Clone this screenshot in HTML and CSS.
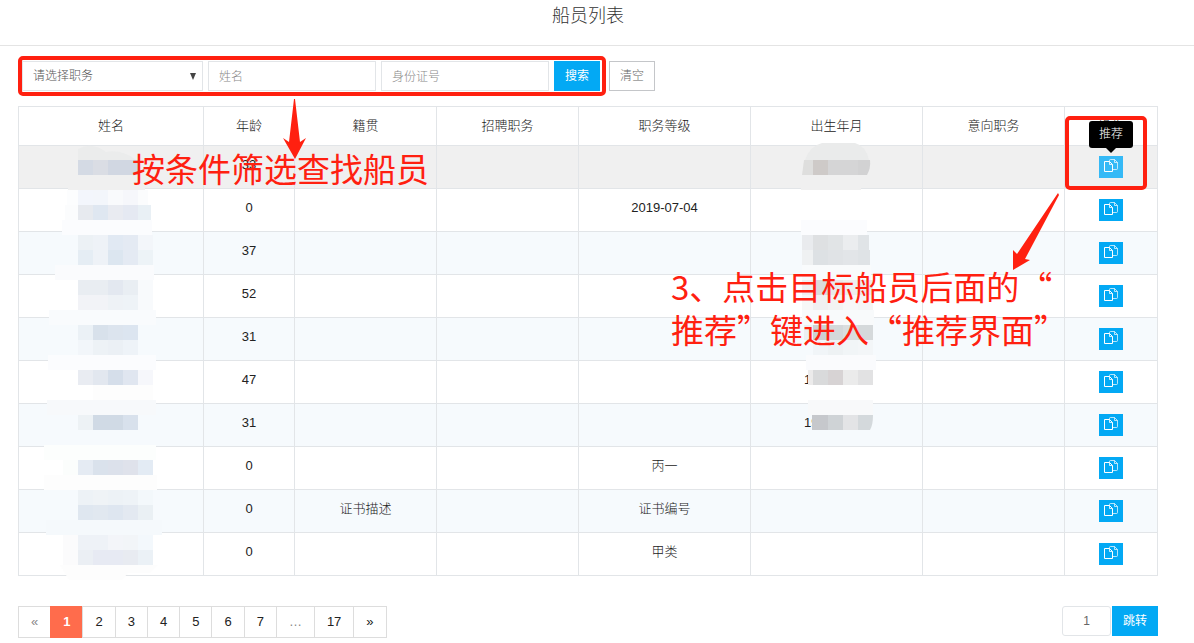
FILE: index.html
```
<!DOCTYPE html>
<html lang="zh-CN">
<head>
<meta charset="utf-8">
<title>船员列表</title>
<link rel="stylesheet" href="styles.css">
</head>
<body>
<svg class="defs" aria-hidden="true">
  <symbol id="copy" viewBox="0 0 16 14">
    <path d="M6.500 2.500V1.500Q6.500 .5 7.500 .5H11.500L14.500 3.500V9.500Q14.500 10.500 13.500 10.500H9.500 M11.500 .5V3.500H14.500" fill="none" stroke="#fff" opacity=".7"/>
    <path d="M1.500 2.500H6.500L9.500 5.500V12.500H1.500Z" fill="none" stroke="#fff"/>
    <path d="M6.500 2.500V5.500H9.500" fill="none" stroke="#fff" opacity=".8"/>
  </symbol>
</svg>
<header class="page-header"><h1>船员列表</h1></header>
<main class="content">
  <form class="filters">
    <div class="select-wrap">
      <select aria-label="职务"><option>请选择职务</option></select>
      <svg class="caret" viewBox="0 0 6 7" aria-hidden="true"><path d="M0 0H6L3 7Z"/></svg>
    </div>
    <input type="text" placeholder="姓名" aria-label="姓名">
    <input type="text" placeholder="身份证号" aria-label="身份证号">
    <button type="button" class="btn primary">搜索</button>
    <button type="button" class="btn clear">清空</button>
  </form>
  <table class="crew">
    <colgroup><col class="c-name"><col class="c-age"><col class="c-mid"><col class="c-mid"><col class="c-wide"><col class="c-wide"><col class="c-mid"><col class="c-act"></colgroup>
    <thead><tr><th>姓名</th><th>年龄</th><th>籍贯</th><th>招聘职务</th><th>职务等级</th><th>出生年月</th><th>意向职务</th><th>操作</th></tr></thead>
    <tbody>
      <tr class="hover"><td></td><td>33</td><td></td><td></td><td></td><td></td><td></td><td><button class="copy" aria-label="推荐"><svg><use href="#copy"/></svg><span class="tip">推荐</span></button></td></tr>
      <tr><td></td><td>0</td><td></td><td></td><td>2019-07-04</td><td></td><td></td><td><button class="copy" aria-label="推荐"><svg><use href="#copy"/></svg></button></td></tr>
      <tr><td></td><td>37</td><td></td><td></td><td></td><td></td><td></td><td><button class="copy" aria-label="推荐"><svg><use href="#copy"/></svg></button></td></tr>
      <tr><td></td><td>52</td><td></td><td></td><td></td><td></td><td></td><td><button class="copy" aria-label="推荐"><svg><use href="#copy"/></svg></button></td></tr>
      <tr><td></td><td>31</td><td></td><td></td><td></td><td></td><td></td><td><button class="copy" aria-label="推荐"><svg><use href="#copy"/></svg></button></td></tr>
      <tr><td></td><td>47</td><td></td><td></td><td></td><td class="partial">1</td><td></td><td><button class="copy" aria-label="推荐"><svg><use href="#copy"/></svg></button></td></tr>
      <tr><td></td><td>31</td><td></td><td></td><td></td><td class="partial">19</td><td></td><td><button class="copy" aria-label="推荐"><svg><use href="#copy"/></svg></button></td></tr>
      <tr><td></td><td>0</td><td></td><td></td><td>丙一</td><td></td><td></td><td><button class="copy" aria-label="推荐"><svg><use href="#copy"/></svg></button></td></tr>
      <tr><td></td><td>0</td><td>证书描述</td><td></td><td>证书编号</td><td></td><td></td><td><button class="copy" aria-label="推荐"><svg><use href="#copy"/></svg></button></td></tr>
      <tr><td></td><td>0</td><td></td><td></td><td>甲类</td><td></td><td></td><td><button class="copy" aria-label="推荐"><svg><use href="#copy"/></svg></button></td></tr>
    </tbody>
  </table>
  <footer class="pager">
    <nav class="pages" aria-label="分页">
      <span class="muted">«</span><a class="active" href="#">1</a><a href="#">2</a><a href="#">3</a><a href="#">4</a><a href="#">5</a><a href="#">6</a><a href="#">7</a><span class="muted">…</span><a href="#">17</a><a href="#">»</a>
    </nav>
    <form class="jump"><input type="text" value="1" aria-label="页码"><button type="button" class="btn primary">跳转</button></form>
  </footer>
</main>
<svg class="overlay" width="1194" height="643" aria-hidden="true">
  <g id="mosaic"></g>
  <path d="M294 99H295L300 142L306 138L295 159L283 138L289 142Z" fill="#ff2010"/>
  <path d="M1058 193L1059 195L1025 259L1030 260L1013 270V250L1017 254Z" fill="#ff2010"/>
</svg>
<div class="mark mark-filter"></div>
<div class="mark mark-action"></div>
<p class="note note-filter">按条件筛选查找船员</p>
<p class="note note-action">3、点击目标船员后面的“<br>推荐”键进入“推荐界面”</p>
<script src="mosaic.js"></script>
</body>
</html>
```
FILE: styles.css
```
* { box-sizing: border-box; }
body {
  margin: 0;
  position: relative;
  background: #fff;
  color: #222;
  font: 13px/19px "Liberation Sans", "Noto Sans CJK SC", sans-serif;
}
button, input, select { font: inherit; font-size: 12px; }
.defs { display: none; }
.page-header {
  height: 46px;
  padding: 3px 36px 0 18px;
  border-bottom: 1px solid #e4e4e4;
  text-align: center;
}
.page-header h1 { margin: 0; font-size: 18px; line-height: 26px; font-weight: 300; color: #333; }
.content { padding: 15px 36px 0 18px; }
.filters { display: flex; gap: 5px; padding-left: 4px; margin-bottom: 15px; }
.select-wrap { position: relative; width: 181px; }
.filters select, .filters input {
  display: block;
  height: 30px;
  padding: 1px 10px 0;
  border: 1px solid #e2e5e8;
  border-radius: 0;
  background: #fff;
  color: #555;
  font-weight: 300;
}
.filters select { width: 100%; appearance: none; }
.filters input { width: 168px; }
.filters input::placeholder { color: #888; opacity: 1; }
.caret { position: absolute; right: 7px; top: 12px; width: 6px; height: 7px; fill: #444; }
.btn { width: 46px; height: 30px; padding: 0; border: 0; }
.primary { background: #03a9f4; color: #fff; }
.clear { margin-left: 4px; border: 1px solid #c4c6c9; background: #fff; color: #666; font-weight: 300; }

.crew { width: calc(100% - 1px); table-layout: fixed; border-collapse: collapse; text-align: center; }
.c-name { width: 185px; }
.c-age { width: 91px; }
.c-mid { width: 142px; }
.c-wide { width: 172px; }
.c-act { width: 93px; }
.crew th, .crew td { border: 1px solid #e2e5e8; }
.crew th { height: 39px; padding: 0 0 2px; font-weight: 300; color: #222; }
.crew td { height: 43px; padding: 9px 0; vertical-align: top; font-weight: 300; }
.crew td:last-child { padding: 10px 0; }
.crew tbody tr:nth-child(odd) { background: #f6fafd; }
.crew tbody tr.hover { background: #f0f0f0; }
.crew td.partial { padding-left: 53px; text-align: left; }
.copy {
  position: relative;
  display: block;
  width: 24px;
  height: 22px;
  margin: 0 auto;
  padding: 3px 4px 5px;
  border: 0;
  background: #03a9f4;
}
.copy svg { display: block; width: 16px; height: 14px; }
.hover .copy { background: #35b9f6; }
.tip {
  position: absolute;
  left: -10px;
  bottom: 30px;
  width: 44px;
  height: 27px;
  border-radius: 3px;
  background: #000;
  color: #fff;
  font-size: 12px;
  line-height: 27px;
}
.tip::after {
  content: "";
  position: absolute;
  left: 17px;
  top: 27px;
  border: 5px solid transparent;
  border-top-color: #000;
  border-bottom: 0;
}

.pager { display: flex; justify-content: space-between; margin-top: 30px; }
.pages { display: flex; }
.pages a, .pages span {
  height: 32px;
  padding: 0 12px;
  margin-left: -1px;
  border: 1px solid #ddd;
  line-height: 30px;
  color: #222;
  text-decoration: none;
}
.pages :first-child { margin-left: 0; }
.pages .muted { color: #888; }
.pages .active { border-color: #ff6c4c; background: #ff6c4c; color: #fff; font-weight: bold; }
.jump { display: flex; gap: 1px; }
.jump input { width: 49px; height: 30px; border: 1px solid #e2e5e8; border-radius: 3px; text-align: center; color: #666; }

.overlay { position: absolute; left: 0; top: 0; pointer-events: none; }
.mark { position: absolute; border: 4px solid #ff2010; border-radius: 5px; pointer-events: none; }
.mark-filter { left: 18px; top: 56px; width: 588px; height: 40px; }
.mark-action { left: 1065px; top: 116px; width: 82px; height: 74px; }
.note {
  position: absolute;
  margin: 0;
  font: 33px/43px "Noto Sans CJK SC", sans-serif;
  color: #ff2010;
  white-space: nowrap;
  pointer-events: none;
}
.note-filter { left: 132px; top: 147px; }
.note-action { left: 671px; top: 265px; }
```
FILE: mosaic.js
```
// Privacy mosaic: each run is [y, startX, endX, colour]; rows are 15px tall.
const runs = [];
const cells = (y, xs, colours) => colours.forEach((c, i) => runs.push([y, xs[i], xs[i + 1], c]));
const L = [78, 93, 108, 123, 138, 153];
const R = [813, 828, 843, 858, 873];

cells(160, [78, 93, 108, 138], ["#d4dae4", "#dadde4", "#d1d7e2"]);
cells(175, [68, 145], ["#f0f0f0"]);
cells(190, [67, 78, 93, 108, 123, 138, 148], ["#fcfdfe", "#f3f6fc", "#f3f6fb", "#f9fafc", "#f6f7fb", "#fbfcfd"]);
cells(205, [65, 78, 93, 108, 123, 138, 151], ["#fbfcfd", "#e7eaef", "#dfe7f1", "#e9ebf1", "#e5e9f2", "#e9f0f5"]);
cells(220, [62, 152], ["#fbfcfe"]);
cells(235, L, ["#ecf1f5", "#eef2f7", "#e1e9f3", "#e4eaf3", "#f3f6fa"]);
cells(250, L, ["#e5edf4", "#eef2f7", "#dce6f0", "#e4eaf3", "#edf3f7"]);
cells(265, [55, 154], ["#fafbfd"]);
cells(280, L, ["#e9edf2", "#e9edf2", "#e3e8f0", "#e9eef3", "#f8fafc"]);
cells(295, L, ["#f2f3f7", "#f2f3f7", "#eef2f6", "#eef3f7", "#f8fafc"]);
cells(310, [49, 156], ["#f9fbfd"]);
cells(325, L, ["#ebf1f6", "#d8e1eb", "#dce4ee", "#dce5f0"]);
cells(340, L, ["#f2f6fa", "#edf2f6", "#ebf0f5", "#eef3f8"]);
cells(355, [48, 156], ["#fbfcfe"]);
cells(370, L, ["#e9ecf2", "#e2e7ef", "#d5deea", "#e0e6f0", "#f6f7fb"]);
cells(385, [93, 153], ["#fdfdfd"]);
cells(400, [47, 156], ["#f7f9fb"]);
cells(415, L, ["#edf2f5", "#d0dae5", "#d0dae5", "#d8e1ec"]);
cells(445, [44, 156], ["#fcfefd"]);
cells(460, [63, ...L], ["#fbfdfc", "#e5ebf3", "#dae2ec", "#dce1eb", "#dfe2eb", "#e3ebf4"]);
cells(475, [44, 157], ["#fdfdfd"]);
cells(490, L, ["#edf2f6", "#eff3f6", "#edf2f6", "#eef3f7", "#f3f8fb"]);
cells(505, L, ["#dfe7f0", "#e1e8f0", "#dee6f0", "#e3e9f1", "#eaf0f4"]);
cells(520, [46, 162], ["#f5f9fc"]);
cells(535, [63, ...L], ["#fbfbfc", "#eef2f7", "#eef2f7", "#f3f5f9", "#f2f5f8", "#f3f8fc"]);
cells(550, [63, ...L], ["#fbfbfc", "#ebeff4", "#e7eaf3", "#e7eaf3", "#e8ebf1", "#ebf1f6"]);

cells(175, [801, 861], ["#f0f0f0"]);
cells(220, [801, 867], ["#fbfcfe"]);
cells(235, [802, 813, 828, 843, 858, 869], ["#e9ebee", "#dee0e2", "#e1e4e6", "#ebedef", "#e0e4e7"]);
cells(250, [802, 813, 828, 843, 858, 870], ["#eff1f2", "#dde1e4", "#e0e3e6", "#e2e5e8", "#dfe3e6"]);
cells(265, [802, 871], ["#f9fbfc"]);
cells(280, [802, ...R], ["#f0f0f2", "#dadbdb", "#e9e9ea", "#eeeeee", "#ebebeb"]);
cells(295, [802, ...R], ["#f7f7f7", "#f0f0f0", "#f3f3f3", "#f7f7f7", "#f5f5f5"]);
cells(310, [802, 874], ["#f8fafb"]);
cells(325, [804, ...R], ["#ecf0f2", "#cdd0d2", "#d4d8da", "#dadedf", "#d5d9db"]);
cells(340, R, ["#f1f5f8", "#eef2f4", "#f1f5f7", "#f3f6f8"]);
cells(355, [806, 876], ["#fafbfd"]);
cells(370, [808, ...R], ["#ecebeb", "#d9dadb", "#d7d3d4", "#ebebeb", "#e2e2e3"]);
cells(400, [808, 873], ["#f8f9fa"]);
cells(415, [812, 828, 843], ["#c6c8cc", "#cfd3d6"]);
cells(415, [843, 858], ["#e3e4e6"]);

// Brush edges that are not square.
const shapes = [
  ["M78 160V149Q92 141 106 152Q122 149 136 160Z", "#ebecec"],
  ["M60 565H158L150 573H128L122 580H69Z", "#fdfdfd"],
  ["M805 160Q810 146 822 143H855Q866 146 869 160Z", "#eaebeb"],
  ["M804 160H813V175H802Z", "#dededd"],
  ["M813 160H828V175H813Z", "#cecac8"],
  ["M828 160H858V175H828Z", "#d5d5d6"],
  ["M858 160H870Q871 168 867 175H858Z", "#d2d2d3"],
  ["M858 415H873Q873 425 870 430H858Z", "#d4d9dc"]
];

const layer = document.getElementById("mosaic");
const add = (name, attrs) => {
  const el = document.createElementNS("http://www.w3.org/2000/svg", name);
  for (const key in attrs) el.setAttribute(key, attrs[key]);
  layer.appendChild(el);
};
for (const [y, x1, x2, fill] of runs) add("rect", { x: x1, y, width: x2 - x1, height: 15, fill });
for (const [d, fill] of shapes) add("path", { d, fill });
```
